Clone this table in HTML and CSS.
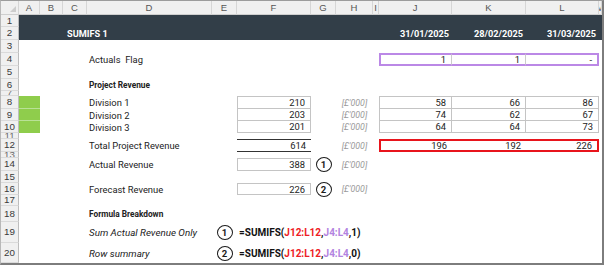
FILE: index.html
```html
<!DOCTYPE html>
<html>
<head>
<meta charset="utf-8">
<link rel="stylesheet" href="styles.css">
</head>
<body>
<div class="sheet">
  <div class="band"></div>

  <div class="row" style="--r:1">
    <div class="ch corner"><span class="tri"></span></div>
    <div class="ch">A</div><div class="ch">B</div><div class="ch">C</div><div class="ch">D</div>
    <div class="ch">E</div><div class="ch">F</div><div class="ch">G</div><div class="ch">H</div>
    <div class="ch">I</div><div class="ch">J</div><div class="ch">K</div><div class="ch">L</div>
    <div class="ch">M</div>
  </div>

  <div class="row" style="--r:2"><div class="rh">1</div></div>
  <div class="row" style="--r:3">
    <div class="rh">2</div>
    <div class="cell title cCD">SUMIFS 1</div>
    <div class="cell date cJ">31/01/2025</div>
    <div class="cell date cK">28/02/2025</div>
    <div class="cell date cL">31/03/2025</div>
  </div>
  <div class="row" style="--r:4"><div class="rh">3</div></div>
  <div class="row" style="--r:5">
    <div class="rh">4</div>
    <div class="cell lbl cD">Actuals&nbsp; Flag</div>
    <div class="cell num cJ pu pul">1</div>
    <div class="cell num cK pu">1</div>
    <div class="cell num cL pu pur">-</div>
  </div>
  <div class="row" style="--r:6"><div class="rh">5</div></div>
  <div class="row" style="--r:7">
    <div class="rh">6</div>
    <div class="cell lbl sect cD">Project Revenue</div>
  </div>
  <div class="row" style="--r:8"><div class="rh hid">7</div></div>
  <div class="row" style="--r:9">
    <div class="rh">8</div>
    <div class="green cA"></div>
    <div class="cell lbl cD">Division 1</div>
    <div class="cell num cF g gl gt">210</div>
    <div class="cell unit cH">[£'000]</div>
    <div class="cell num cJ g gl gt">58</div>
    <div class="cell num cK g gt">66</div>
    <div class="cell num cL g gt">86</div>
  </div>
  <div class="row" style="--r:10">
    <div class="rh">9</div>
    <div class="green cA"></div>
    <div class="cell lbl cD">Division 2</div>
    <div class="cell num cF g gl">203</div>
    <div class="cell unit cH">[£'000]</div>
    <div class="cell num cJ g gl">74</div>
    <div class="cell num cK g">62</div>
    <div class="cell num cL g">67</div>
  </div>
  <div class="row" style="--r:11">
    <div class="rh">10</div>
    <div class="green last cA"></div>
    <div class="cell lbl cD">Division 3</div>
    <div class="cell num cF g gl">201</div>
    <div class="cell unit cH">[£'000]</div>
    <div class="cell num cJ g gl">64</div>
    <div class="cell num cK g">64</div>
    <div class="cell num cL g">73</div>
  </div>
  <div class="row" style="--r:12"><div class="rh hid">11</div></div>
  <div class="row" style="--r:13">
    <div class="rh">12</div>
    <div class="cell lbl cD">Total Project Revenue</div>
    <div class="cell num cF total">614</div>
    <div class="cell unit cH">[£'000]</div>
    <div class="cell num cJ rd rdl">196</div>
    <div class="cell num cK rd">192</div>
    <div class="cell num cL rd rdr">226</div>
  </div>
  <div class="row" style="--r:14"><div class="rh hid">13</div></div>
  <div class="row" style="--r:15">
    <div class="rh">14</div>
    <div class="cell lbl cD">Actual Revenue</div>
    <div class="cell num cF g gl gt">388</div>
    <div class="circ cG">1</div>
    <div class="cell unit cH">[£'000]</div>
  </div>
  <div class="row" style="--r:16"><div class="rh">15</div></div>
  <div class="row" style="--r:17">
    <div class="rh">16</div>
    <div class="cell lbl cD">Forecast Revenue</div>
    <div class="cell num cF g gl gt">226</div>
    <div class="circ cG">2</div>
    <div class="cell unit cH">[£'000]</div>
  </div>
  <div class="row" style="--r:18"><div class="rh">17</div></div>
  <div class="row" style="--r:19">
    <div class="rh">18</div>
    <div class="cell lbl sect cD">Formula Breakdown</div>
  </div>
  <div class="row" style="--r:20">
    <div class="rh">19</div>
    <div class="cell lbl ital cD">Sum Actual Revenue Only</div>
    <div class="circ cE">1</div>
    <div class="cell formula">=SUMIFS(<span class="ref1">J12:L12</span>,<span class="ref2">J4:L4</span>,1)</div>
  </div>
  <div class="row" style="--r:21">
    <div class="rh">20</div>
    <div class="cell lbl ital cD">Row summary</div>
    <div class="circ cE">2</div>
    <div class="cell formula">=SUMIFS(<span class="ref1">J12:L12</span>,<span class="ref2">J4:L4</span>,0)</div>
  </div>
</div>
</body>
</html>
```

FILE: styles.css
```css
* { box-sizing: border-box; }
html, body { margin: 0; padding: 0; background: #fff; }

.sheet {
  width: 604px;
  height: 265px;
  display: grid;
  grid-template-columns: 18px 21px 23px 24px 125px 25px 74px 25px 37px 6px 73px 74px 73px 1fr;
  grid-template-rows: 14px 12px 13px 13px 13px 13px 12px 5px 13px 12px 12px 6px 13px 6px 13px 12px 12px 11px 16px 21px 20px;
  border-top: 1px solid #9c9c9c;
  border-left: 1px solid #b8b8b8;
  border-right: 2px solid #7d7d7d;
  border-bottom: 2px solid #7d7d7d;
  font-family: Roboto, "Liberation Sans", sans-serif;
  font-size: 9.4px;
  color: #222;
  overflow: hidden;
}

.row { display: contents; }
.row > * { grid-row: var(--r); }

.band {
  grid-row: 2 / 4;
  grid-column: 2 / -1;
  background: #323e48;
}

/* headers */
.ch {
  background: #f0f0f0;
  color: #555;
  font-family: "Liberation Sans", Arial, sans-serif;
  font-size: 9.5px;
  display: flex;
  align-items: center;
  justify-content: center;
  border-right: 1px solid #d6d6d6;
  border-bottom: 1px solid #cfcfcf;
  overflow: hidden;
}
.corner { position: relative; }
.tri {
  position: absolute;
  right: 2px;
  bottom: 2px;
  width: 0;
  height: 0;
  border-left: 6px solid transparent;
  border-bottom: 6px solid #cdcdcd;
}
.rh {
  grid-column: 1;
  background: #f0f0f0;
  color: #3a3a3a;
  font-family: "Liberation Sans", Arial, sans-serif;
  font-size: 9.8px;
  display: flex;
  align-items: center;
  justify-content: center;
  border-right: 1px solid #bdbdbd;
  border-bottom: 1px solid #dadada;
  overflow: hidden;
  line-height: 1;
}
.rh.hid { font-size: 9.8px; line-height: 4px; color: #6a6a6a; }

/* columns */
.cA { grid-column: 2; }
.cD { grid-column: 5; }
.cCD { grid-column: 4 / 6; }
.cE { grid-column: 6; }
.cF { grid-column: 7; }
.cG { grid-column: 8; }
.cH { grid-column: 9; }
.cJ { grid-column: 11; }
.cK { grid-column: 12; }
.cL { grid-column: 13; }

/* cells */
.cell {
  display: flex;
  align-items: center;
  white-space: nowrap;
  min-width: 0;
}
.title {
  color: #fff;
  font-weight: 700;
  font-size: 9.2px;
  padding-left: 4px;
}
.date {
  color: #fff;
  font-weight: 700;
  font-size: 9.2px;
  justify-content: flex-end;
  padding-right: 3px;
}
.lbl { padding-left: 2px; }
.sect { font-weight: 700; font-size: 8.3px; }
.ital { font-style: italic; font-size: 9.8px; }
.num {
  justify-content: flex-end;
  padding-right: 5px;
}
.unit {
  justify-content: center;
  font-style: italic;
  color: #9a9a9a;
  font-size: 8.8px;
}

.green {
  background: #8fcd4c;
  border-bottom: 1px solid #b9e196;
}
.green.last { border-bottom: none; }

.g { border-right: 1px solid #c4c4c4; border-bottom: 1px solid #c4c4c4; }
.gl { border-left: 1px solid #c4c4c4; }
.gt { border-top: 1px solid #c4c4c4; }

.pu {
  border-top: 2px solid #bb88e6;
  border-bottom: 2px solid #bb88e6;
  border-right: 1px solid #cccccc;
}
.pul { border-left: 2px solid #bb88e6; }
.pur { border-right: 2px solid #bb88e6; }

.total {
  border-top: 1px solid #333;
  border-bottom: 1px solid #333;
}

.rd {
  border-top: 2px solid #e8141c;
  border-bottom: 2px solid #e8141c;
}
.rdl { border-left: 2px solid #e8141c; }
.rdr { border-right: 2px solid #e8141c; }

.circ {
  width: 16px;
  height: 15px;
  border: 1.5px solid #1c1c1c;
  border-radius: 50%;
  display: flex;
  align-items: center;
  justify-content: center;
  justify-self: center;
  align-self: center;
  font-weight: 700;
  font-size: 9.6px;
  color: #1c1c1c;
}

.formula {
  grid-column: 7 / 12;
  font-weight: 700;
  font-size: 10px;
  padding-left: 2px;
  color: #111;
}
.ref1 { color: #ee1c25; }
.ref2 { color: #b283e0; }
```
